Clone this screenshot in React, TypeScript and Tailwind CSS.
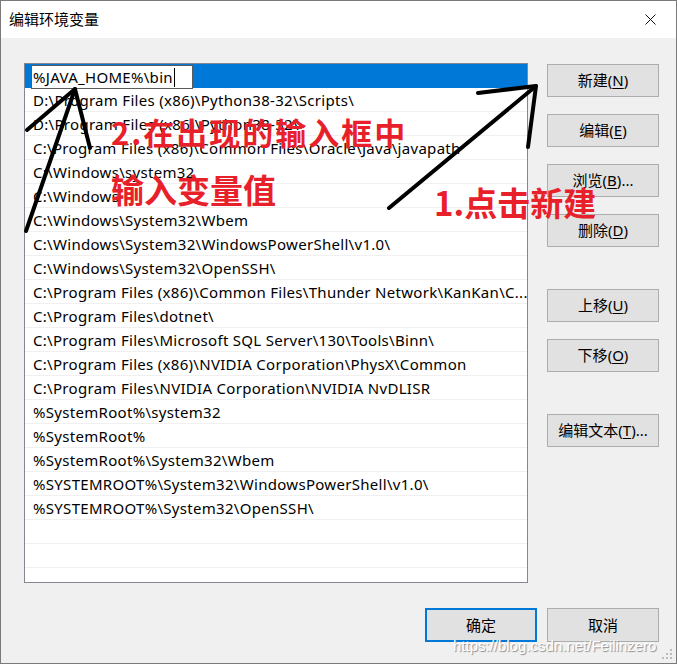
import React from "react";

const rows = [
  "D:\\Program Files (x86)\\Python38-32\\Scripts\\",
  "D:\\Program Files (x86)\\Python38-32\\",
  "C:\\Program Files (x86)\\Common Files\\Oracle\\Java\\javapath",
  "C:\\Windows\\system32",
  "C:\\Windows",
  "C:\\Windows\\System32\\Wbem",
  "C:\\Windows\\System32\\WindowsPowerShell\\v1.0\\",
  "C:\\Windows\\System32\\OpenSSH\\",
  "C:\\Program Files (x86)\\Common Files\\Thunder Network\\KanKan\\C...",
  "C:\\Program Files\\dotnet\\",
  "C:\\Program Files\\Microsoft SQL Server\\130\\Tools\\Binn\\",
  "C:\\Program Files (x86)\\NVIDIA Corporation\\PhysX\\Common",
  "C:\\Program Files\\NVIDIA Corporation\\NVIDIA NvDLISR",
  "%SystemRoot%\\system32",
  "%SystemRoot%",
  "%SystemRoot%\\System32\\Wbem",
  "%SYSTEMROOT%\\System32\\WindowsPowerShell\\v1.0\\",
  "%SYSTEMROOT%\\System32\\OpenSSH\\",
  "",
  "",
];

function Btn({ label, k, tail = "", className = "" }: { label: string; k: string; tail?: string; className?: string }) {
  return (
    <div className={"w-[112px] h-[33px] bg-[#e1e1e1] border border-[#adadad] flex items-center justify-center text-[15px] text-black " + className}>
      <span>
        {label}(<span className="underline underline-offset-2">{k}</span>){tail}
      </span>
    </div>
  );
}

export default function App() {
  return (
    <div className="relative w-[677px] h-[664px] border border-[#7a7a7a] bg-[#f0f0f0] flex flex-col font-['Noto_Sans','Noto_Sans_CJK_SC',sans-serif] text-black overflow-hidden">
      {/* title bar */}
      <div className="h-[37px] bg-white flex items-center justify-between pl-[8px] pr-[20px] shrink-0">
        <span className="text-[15px] leading-none">编辑环境变量</span>
        <svg width="11" height="11" viewBox="0 0 11 11">
          <path d="M0.5 0.5 L10.5 10.5 M10.5 0.5 L0.5 10.5" stroke="#111" strokeWidth="1" />
        </svg>
      </div>

      <div className="flex-1 flex flex-col pl-[23px] pr-[17px] pt-[25px]">
        <div className="flex">
          {/* list */}
          <div className="w-[504px] h-[520px] border border-[#828790] bg-white flex flex-col overflow-hidden text-[15px] tracking-[0.3px]">
            <div className="h-[24px] bg-[#0078d7] flex items-start shrink-0">
              <div className="ml-[6px] mt-px w-[162px] h-[24px] bg-white border border-[#5a5a5a] flex items-center pl-[1px] pt-px leading-none">
                <span>%JAVA_HOME%\bin</span>
                <span className="w-px h-[19px] bg-black ml-[1px]" />
              </div>
            </div>
            {rows.map((r, i) => (
              <div key={i} className="h-[24px] shrink-0 border-b border-[#f0f0f0] flex items-center pl-[8px] pt-[2px] leading-none whitespace-nowrap">
                {r}
              </div>
            ))}
            <div className="flex-1" />
          </div>

          {/* side buttons */}
          <div className="ml-auto mt-px flex flex-col">
            <Btn label="新建" k="N" />
            <Btn label="编辑" k="E" className="mt-[17px]" />
            <Btn label="浏览" k="B" tail="..." className="mt-[17px]" />
            <Btn label="删除" k="D" className="mt-[17px]" />
            <Btn label="上移" k="U" className="mt-[42px]" />
            <Btn label="下移" k="O" className="mt-[17px]" />
            <Btn label="编辑文本" k="T" tail="..." className="mt-[42px]" />
          </div>
        </div>

        {/* bottom buttons */}
        <div className="mt-[25px] flex justify-end gap-[10px]">
          <div className="w-[112px] h-[34px] bg-[#e1e1e1] border-2 border-[#0078d7] flex items-center justify-center text-[15px]">确定</div>
          <div className="w-[112px] h-[34px] bg-[#e1e1e1] border border-[#adadad] flex items-center justify-center text-[15px]">取消</div>
        </div>
      </div>

      {/* annotations */}
      <svg className="absolute left-0 top-0 pointer-events-none" width="677" height="664" viewBox="0 0 677 664">
        <g stroke="#000" strokeWidth="4" strokeLinecap="round" strokeLinejoin="round" fill="none">
          <path d="M25 230 L74 88" />
          <path d="M26 129 L74 88 L89 147" />
          <path d="M388 207 L535 85" />
          <path d="M477 92 L535 85 L527 146" />
        </g>
      </svg>
      <div className="absolute left-[110px] top-[115px] text-[31px] leading-none font-bold tracking-[2px] text-[#e8202a] font-['Noto_Sans_CJK_SC',sans-serif] whitespace-nowrap">
        2.在出现的输入框中
      </div>
      <div className="absolute left-[110px] top-[172px] text-[33px] leading-none font-bold text-[#e8202a] font-['Noto_Sans_CJK_SC',sans-serif] whitespace-nowrap">
        输入变量值
      </div>
      <div className="absolute left-[433px] top-[185px] text-[33px] leading-none font-bold text-[#e8202a] font-['Noto_Sans_CJK_SC',sans-serif] whitespace-nowrap">
        1.点击新建
      </div>

      {/* watermark */}
      <div className="absolute left-[452px] top-[637px] text-[15px] leading-none text-white font-['Liberation_Sans',sans-serif] [text-shadow:1px_1px_1px_#8a8a8a] whitespace-nowrap">
        https://blog.csdn.net/Feilinzero
      </div>

      {/* size grip */}
      <svg className="absolute right-[3px] bottom-[3px]" width="11" height="11" viewBox="0 0 11 11">
        <g fill="#bcbcbc">
          <rect x="8" y="0" width="2" height="2" />
          <rect x="4" y="4" width="2" height="2" />
          <rect x="8" y="4" width="2" height="2" />
          <rect x="0" y="8" width="2" height="2" />
          <rect x="4" y="8" width="2" height="2" />
          <rect x="8" y="8" width="2" height="2" />
        </g>
      </svg>
    </div>
  );
}
